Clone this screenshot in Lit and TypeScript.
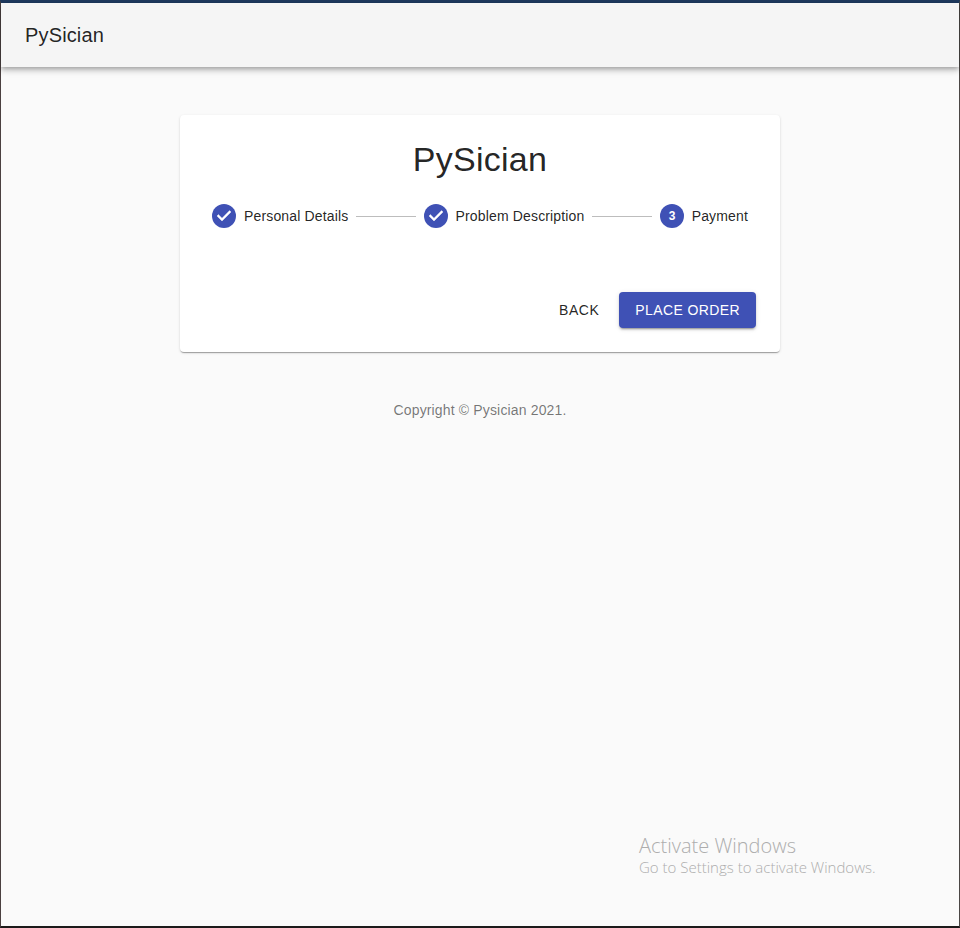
import { LitElement, html, css } from "lit";
import { customElement } from "lit/decorators.js";

@customElement("app-root")
export class AppRoot extends LitElement {
  static styles = css`
    :host { display: block; font-family: "Liberation Sans", Arial, sans-serif; }
    * { box-sizing: border-box; }
    .screen {
      position: relative; height: 928px; background: #fafafa;
      border-top: 3px solid #1f3a5f; border-left: 1px solid #4a4040; border-right: 1px solid #4a4644; border-bottom: 2px solid #1c1a1a;
      display: flex; flex-direction: column; align-items: center;
    }
    header {
      align-self: stretch; height: 64px; background: #f5f5f5; display: flex; align-items: center; padding: 0 24px;
      font-size: 20px; color: rgba(0,0,0,.87); line-height: 1.6; letter-spacing: 0.15px;
      box-shadow: 0 2px 4px -1px rgba(0,0,0,.2), 0 4px 5px 0 rgba(0,0,0,.14), 0 1px 10px 0 rgba(0,0,0,.12);
    }
    .card {
      width: 600px; height: 237px; margin-top: 48px; background: #fff; border-radius: 4px; padding: 24px;
      box-shadow: 0 2px 1px -1px rgba(0,0,0,.2), 0 1px 1px 0 rgba(0,0,0,.14), 0 1px 3px 0 rgba(0,0,0,.12);
      display: flex; flex-direction: column;
    }
    h1 { margin: 0; font-weight: 400; font-size: 34px; line-height: 41px; letter-spacing: 0.25px; text-align: center; color: rgba(0,0,0,.87); }
    .stepper { display: flex; align-items: center; padding: 24px 8px; font-size: 14px; letter-spacing: 0.15px; color: rgba(0,0,0,.87); }
    .step { display: flex; align-items: center; gap: 8px; white-space: nowrap; }
    .step svg { display: block; width: 24px; height: 24px; }
    .num { fill: #fff; font-size: 12px; font-weight: 700; letter-spacing: 0; font-family: "Liberation Sans", Arial, sans-serif; text-anchor: middle; }
    .line { flex: 1; height: 1px; background: #bdbdbd; margin: 0 8px; }
    .actions { margin-top: auto; display: flex; justify-content: flex-end; align-items: center; gap: 12px; }
    button {
      font: inherit; font-size: 14px; letter-spacing: 0.4px; height: 36px; border: 0; border-radius: 4px; cursor: pointer; line-height: 1.75;
    }
    .back { background: none; padding: 6px 8px; color: rgba(0,0,0,.87); letter-spacing: 0.5px; }
    .order {
      background: #3f51b5; color: #fff; padding: 6px 16px;
      box-shadow: 0 3px 1px -2px rgba(0,0,0,.2), 0 2px 2px 0 rgba(0,0,0,.14), 0 1px 5px 0 rgba(0,0,0,.12);
    }
    .copy { margin-top: 48px; font-size: 14px; line-height: 20px; letter-spacing: 0.15px; color: rgba(0,0,0,.54); text-align: center; }
    .wm {
      position: absolute; left: 638px; top: 829px; font-family: "Open Sans", sans-serif; font-weight: 300; color: #adadad; white-space: nowrap;
    }
    .wm .a { font-size: 20px; line-height: 27px; }
    .wm .b { font-size: 15px; line-height: 18px; margin-top: -1px; }
  `;

  private check() {
    return html`<svg viewBox="0 0 24 24"><circle cx="12" cy="12" r="12" fill="#3f51b5"></circle><path fill="#fff" stroke="#fff" stroke-width="0.4" d="M10 17l-5-5 1.41-1.41L10 14.17l7.59-7.59L19 8z"></path></svg>`;
  }

  render() {
    return html`
      <div class="screen">
        <header>PySician</header>
        <main class="card">
          <h1>PySician</h1>
          <div class="stepper">
            <div class="step">${this.check()}<span>Personal Details</span></div>
            <div class="line"></div>
            <div class="step">${this.check()}<span>Problem Description</span></div>
            <div class="line"></div>
            <div class="step">
              <svg viewBox="0 0 24 24"><circle cx="12" cy="12" r="12" fill="#3f51b5"></circle><text class="num" x="12" y="16">3</text></svg>
              <span>Payment</span>
            </div>
          </div>
          <div class="actions">
            <button class="back">BACK</button>
            <button class="order">PLACE ORDER</button>
          </div>
        </main>
        <div class="copy">Copyright © Pysician 2021.</div>
        <div class="wm"><div class="a">Activate Windows</div><div class="b">Go to Settings to activate Windows.</div></div>
      </div>
    `;
  }
}
